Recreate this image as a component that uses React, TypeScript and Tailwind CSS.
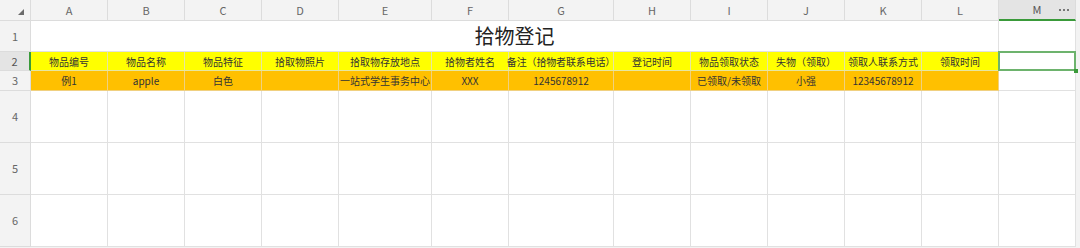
import React from "react";

const cols = ["A","B","C","D","E","F","G","H","I","J","K","L","M"];
const row2 = ["物品编号","物品名称","物品特征","拾取物照片","拾取物存放地点","拾物者姓名","备注（拾物者联系电话）","登记时间","物品领取状态","失物（领取）","领取人联系方式","领取时间"];
const row3 = ["例1","apple","白色","","一站式学生事务中心","XXX","1245678912","","已领取/未领取","小强","12345678912",""];

const font = { fontFamily: '"Microsoft YaHei","Noto Sans CJK SC","Noto Sans",sans-serif' };

export default function App() {
  const cell = "border-r border-b border-[#e1e1e1] box-border";
  const hdr = "border-r border-b border-[#dcdcdc] bg-[#f3f3f3] text-[#666] text-[11px] flex items-center justify-center box-border";
  return (
    <div className="w-[1080px] h-[248px] bg-[#f3f3f3] overflow-hidden" style={font}>
      <div className="grid grid-cols-[31px_77px_77px_77px_77px_93px_77px_105px_77px_77px_77px_77px_77px_77px_1fr] grid-rows-[21px_31px_19px_20px_52px_52px_52px_1fr] h-[248px] bg-white">
        {/* header row */}
        <div className={hdr + " relative"}>
          <svg className="absolute right-[6px] bottom-[5px]" width="6" height="6" viewBox="0 0 6 6"><polygon points="6,0 6,6 0,6" fill="#6b6b6b" /></svg>
        </div>
        {cols.map((c) =>
          c === "M" ? (
            <div key={c} className="border-r border-b-2 border-r-[#dcdcdc] border-b-[#3a9a3a] bg-[#e4e4e4] text-[#555] text-[11px] flex items-center justify-center relative box-border">
              M
              <svg className="absolute right-[6px] top-[9px]" width="10" height="2" viewBox="0 0 10 2">
                <rect x="0" y="0" width="2" height="2" fill="#777" />
                <rect x="4" y="0" width="2" height="2" fill="#777" />
                <rect x="8" y="0" width="2" height="2" fill="#777" />
              </svg>
            </div>
          ) : (
            <div key={c} className={hdr}>{c}</div>
          )
        )}
        <div className="bg-[#f3f3f3]"></div>

        {/* row 1 */}
        <div className={hdr}>1</div>
        <div className={cell + " col-span-12 flex items-center justify-center text-[20px] text-[#222]"}>拾物登记</div>
        <div className={cell}></div>
        <div className="bg-[#f3f3f3]"></div>

        {/* row 2 */}
        <div className="border-r-2 border-b border-r-[#3a9a3a] border-b-[#dcdcdc] bg-[#e4e4e4] text-[#555] text-[11px] flex items-center justify-center box-border">2</div>
        {row2.map((t, i) => (
          <div key={i} className="border-r border-b border-[#e6e6a0] bg-[#ffff00] text-[10px] text-[#333] flex items-center justify-center whitespace-nowrap box-border">
            <span className={i === 6 ? "tracking-[-0.15px]" : ""}>{t}</span>
          </div>
        ))}
        <div className="relative bg-white box-border">
          <div className="absolute -left-[1px] -top-[1px] right-[0px] bottom-[0px] border-2 border-[#6db36d]"></div>
          <div className="absolute right-[-2px] bottom-[-2px] w-[4px] h-[4px] bg-[#3a9a3a]"></div>
        </div>
        <div className="bg-[#f3f3f3]"></div>

        {/* row 3 */}
        <div className={hdr}>3</div>
        {row3.map((t, i) => (
          <div key={i} className="border-r border-b border-[#f0d080] bg-[#ffc000] text-[10px] text-[#333] flex items-center justify-center whitespace-nowrap box-border">{t}</div>
        ))}
        <div className={cell}></div>
        <div className="bg-[#f3f3f3]"></div>

        {[4,5,6].map((r) => (
          <React.Fragment key={r}>
            <div className={hdr}>{r}</div>
            {cols.map((c) => (
              <div key={c} className={cell}></div>
            ))}
            <div className="bg-[#f3f3f3]"></div>
          </React.Fragment>
        ))}
        <div className="col-span-15 bg-[#f3f3f3]"></div>
      </div>
    </div>
  );
}
